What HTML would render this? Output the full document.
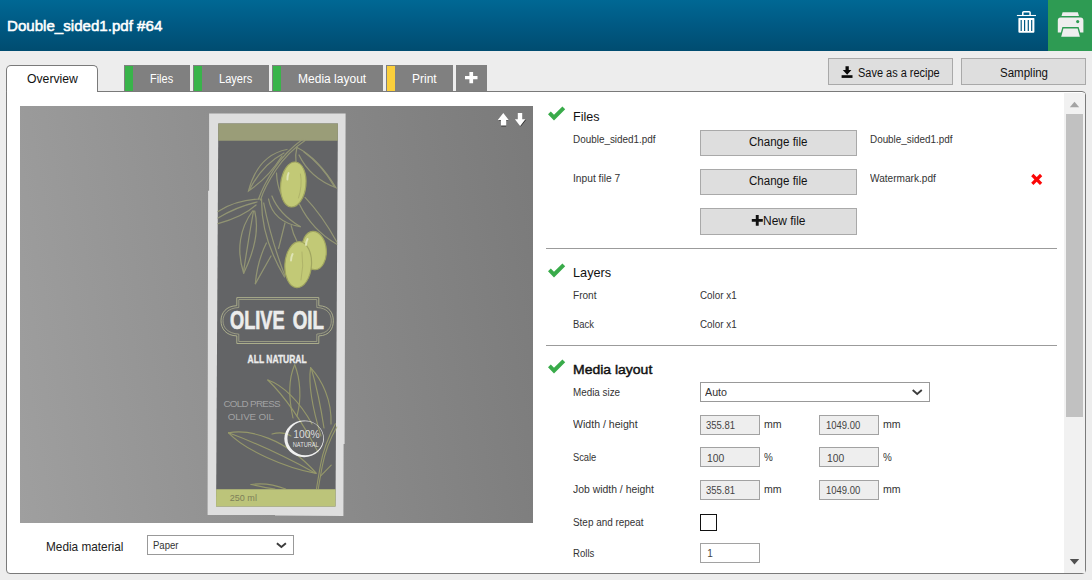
<!DOCTYPE html>
<html lang="en"><head><meta charset="utf-8"><title>Double_sided1.pdf #64</title>
<style>
html,body{margin:0;padding:0}
body{width:1092px;height:580px;overflow:hidden;background:#ededed;font-family:"Liberation Sans",sans-serif;position:relative;color:#222}
.a{position:absolute}
.t{position:absolute;white-space:nowrap;line-height:1}
.hdr{left:0;top:0;width:1092px;height:51px;background:linear-gradient(#006894,#005983 50%,#004c70)}
.pbtn{left:1048px;top:0;width:44px;height:51px;background:#2e9b53}
.tab{position:absolute;top:65px;height:26px;background:#808080}
.tab i{position:absolute;left:1px;top:1px;bottom:0;width:8px}
.g{background:#39b44a}.y{background:#fbcf3b}
.ov{left:6px;top:65px;width:90px;height:27px;background:#fff;border:1px solid #7a7a7a;border-bottom:none;border-radius:5px 5px 0 0}
.panel{left:6px;top:91px;width:1078px;height:481px;background:#fff;border:1px solid #7a7a7a;border-radius:0 4px 4px 4px}
.btn{position:absolute;box-sizing:border-box;background:#dedede;border:1px solid #a9a9a9}
.inp{position:absolute;box-sizing:border-box;background:#eee;border:1px solid #a2a2a2;height:20px}
.sel{position:absolute;box-sizing:border-box;background:#fff;border:1px solid #999}
.sep{position:absolute;left:546px;width:511px;height:1px;background:#9b9b9b}
</style></head>
<body>
<div class="a hdr"></div><div class="a pbtn"></div>
<div class="t" style="left:7.40px;top:17.76px;font-size:15.4px;color:#fff;font-weight:normal;transform:translateY(-0.5px) scaleX(0.9810);transform-origin:0 0;-webkit-text-stroke:0.55px #fff;">Double_sided1.pdf #64</div>
<svg class="a" style="left:1010px;top:5px" width="35" height="35" viewBox="1010 5 35 35">
<path d="M1022.8 15.2V12.6a0.9 0.9 0 0 1 0.9-0.9h5.5a0.9 0.9 0 0 1 0.9 0.9V15.2" fill="none" stroke="#fff" stroke-width="1.5"/>
<path d="M1016.9 15.5H1036" stroke="#fff" stroke-width="1.1"/>
<path fill="#fff" fill-rule="evenodd" d="M1018.4 18.4a0.4 0.4 0 0 1 0.4-0.4H1034a0.4 0.4 0 0 1 0.4 0.4V31.8a1 1 0 0 1-1 1H1019.4a1 1 0 0 1-1-1Z M1020.6 20H1021.8V31H1020.6Z M1024 20H1025.2V31H1024Z M1027.7 20H1028.9V31H1027.7Z M1031.1 20H1032.3V31H1031.1Z"/>
</svg>
<svg class="a" style="left:1054px;top:8px" width="34" height="34" viewBox="0 0 34 34">
<path d="M8.6 4.3H23.8L25 8H7.5Z" fill="#eee"/>
<path d="M3.8 24.5V12.4a2.9 2.9 0 0 1 2.9-2.9H26.5a2.9 2.9 0 0 1 2.9 2.9V24.5H26.2L24.6 18.9H8.4L6.9 24.5Z" fill="#eee"/>
<path d="M9.4 20.4H23.6L25.9 28.8H7.2Z" fill="#eee"/>
<circle cx="23.7" cy="13.6" r="1.6" fill="#2e9b53"/>
</svg>
<div class="a ov"></div>
<div class="t" style="left:26.90px;top:72.54px;font-size:12px;color:#111;font-weight:normal;transform:scaleX(1.0178);transform-origin:0 0;">Overview</div>
<div class="tab" style="left:124px;width:66px"><i class="g"></i></div>
<div class="t" style="left:149.80px;top:72.64px;font-size:12px;color:#fff;font-weight:normal;transform:scaleX(0.9117);transform-origin:0 0;">Files</div>
<div class="tab" style="left:193px;width:76px"><i class="g"></i></div>
<div class="t" style="left:218.70px;top:72.64px;font-size:12px;color:#fff;font-weight:normal;transform:scaleX(0.9217);transform-origin:0 0;">Layers</div>
<div class="tab" style="left:272px;width:111px"><i class="g"></i></div>
<div class="t" style="left:297.90px;top:72.64px;font-size:12px;color:#fff;font-weight:normal;transform:scaleX(1.0023);transform-origin:0 0;">Media layout</div>
<div class="tab" style="left:386px;width:67px"><i class="y"></i></div>
<div class="t" style="left:411.70px;top:72.64px;font-size:12px;color:#fff;font-weight:normal;transform:scaleX(1.0010);transform-origin:0 0;">Print</div>
<div class="tab" style="left:456px;width:31px"></div>
<svg class="a" style="left:464px;top:71px" width="15" height="14" viewBox="464 71 15 14"><path d="M469.4 71.9H473.1V75.9H477.5V79.3H473.1V83.3H469.4V79.3H465V75.9H469.4Z" fill="#fff"/></svg>
<div class="btn" style="left:828px;top:58px;width:125px;height:27px"></div>
<div class="btn" style="left:961px;top:58px;width:125px;height:27px"></div>
<svg class="a" style="left:841px;top:66px" width="12" height="12" viewBox="0 0 12 12"><path d="M4.5 0.2H7.8V3.9H10.4L6.15 8.7L1.8 3.9H4.5Z" fill="#0a0a0a"/><rect x="0.6" y="9.2" width="10.9" height="2.7" fill="#0a0a0a"/></svg>
<div class="t" style="left:858.00px;top:66.94px;font-size:12px;color:#111;font-weight:normal;transform:scaleX(0.9140);transform-origin:0 0;">Save as a recipe</div>
<div class="t" style="left:999.70px;top:66.94px;font-size:12px;color:#111;font-weight:normal;transform:scaleX(0.9594);transform-origin:0 0;">Sampling</div>
<div class="a panel"></div>
<div class="a" style="left:7px;top:90px;width:90px;height:3px;background:#fff"></div>
<div class="a" style="left:20px;top:106px;width:513px;height:417px;background:linear-gradient(80deg,#9f9f9f,#7a7a7a)"></div>
<svg class="a" style="left:200px;top:106px" width="160" height="417" viewBox="200 106 160 417" font-family="Liberation Sans, sans-serif">
<polygon points="209.1,113.6 345.6,113.6 344.6,444 343.6,444 343.4,516 275,515.6 275,515 207.6,515 208.1,190.8 209.1,190.8" fill="#dedede"/>
<polygon points="218.3,123.4 337.9,123.4 335.5,506.6 216.1,506.6" fill="#636466"/>
<polygon points="218.3,123.4 337.9,123.4 337.8,140.7 218.2,140.7" fill="#9a9d78"/>
<polygon points="216.2,489.2 335.6,489.2 335.5,506.6 216.1,506.6" fill="#bcc47a"/>
<g fill="none" stroke="#9a9d76" stroke-width="1.25" stroke-linecap="round" opacity="0.85">
<path d="M303,139 Q285,152 274,169 T258.5,199"/><path d="M305,140.5 Q288,152 276.2,169.5 T260.5,200"/>
<path d="M287,149.5 Q258,155 248.5,191 Q268,178 282,156"/><path d="M284,153 Q262,165 250,189"/>
<path d="M297,147.5 Q318,158 336,187.7 Q310,178 299,155"/><path d="M304,152 Q322,165 334,186"/>
<path d="M297,147 Q295,155 296,162"/><path d="M276.5,173 Q277,185 281,194"/>
<path d="M259.5,199 Q236,200 218,211.5"/><path d="M218,223.6 Q243,217 256,205"/><path d="M257,202 Q236,207 218,218"/>
<path d="M252.6,211 C240,228 236,250 243.7,273.2"/><path d="M254.7,211 C260,232 252,256 243.7,273.2"/><path d="M253.5,211 Q248,242 243.5,272"/>
<path d="M261.6,198.8 C261,230 272,256 284.5,277"/><path d="M263.7,203 C268,225 275,250 285,276"/>
<path d="M271.9,196 Q279,214 300.2,226.6"/><path d="M268.5,199 Q273,222 300.2,226.6"/>
<path d="M285,223 L278.6,248.4"/>
<path d="M266.4,243 Q257,262 255.4,283.6"/><path d="M271,256 Q262,272 255.4,283.6"/>
<path d="M305,197.4 Q322,215 336.8,242"/><path d="M299.5,204.3 Q312,230 336.8,244.3"/>
<path d="M291.2,225.7 Q293,234 296.8,241"/>
</g>
<g stroke="#a0a560" stroke-width="1.2" fill="#c2c976">
<ellipse cx="293.3" cy="184.5" rx="12.6" ry="22.6" transform="rotate(6 293.3 184.5)"/>
<ellipse cx="314" cy="250.5" rx="12.3" ry="19.2" transform="rotate(-4 314 250.5)"/>
<ellipse cx="298.2" cy="264.6" rx="13.3" ry="23" transform="rotate(4 298.2 264.6)"/>
</g>
<g fill="none" stroke="#dfe4b6" stroke-width="1.9" stroke-linecap="round">
<path d="M288.6,173 Q287.2,176 287.4,179.5"/><path d="M307.6,239 Q306,242 306,245"/><path d="M292.6,254 Q291,257 291,260.5"/>
</g>
<g fill="none" stroke="#a9ad66" stroke-width="0.8" stroke-linecap="round">
<path d="M300.5,174 Q302.5,186 298.5,198"/><path d="M302,252 Q304,266 301,280"/>
</g>
<g fill="none" stroke="#b3b590" stroke-width="0.9">
<path d="M236.8,297.6 H318.8 V305.7 C329.5,306 333.3,313 333.3,320.8 C333.3,328.6 329.5,335.6 318.8,335.9 V343.5 H236.8 V335.9 C226,335.6 221,328.6 221,320.8 C221,313 226,306 236.8,305.7 Z"/>
<path d="M238.8,299.5 H316.8 V307.5 C327.5,308 331.3,314 331.3,320.8 C331.3,327.6 327.5,333.6 316.8,334.1 V341.5 H238.8 V334.1 C228,333.6 223,327.6 223,320.8 C223,314 228,308 238.8,307.5 Z" stroke-opacity="0.75"/>
</g>
<text x="230" y="328.9" font-size="25.6" font-weight="bold" fill="#ececec" stroke="#ececec" stroke-width="0.7" textLength="54.6" lengthAdjust="spacingAndGlyphs">OLIVE</text><text x="292.7" y="328.9" font-size="25.6" font-weight="bold" fill="#ececec" stroke="#ececec" stroke-width="0.7" textLength="31.2" lengthAdjust="spacingAndGlyphs">OIL</text>
<text x="247.6" y="363.4" font-size="11.6" font-weight="bold" fill="#ececec" stroke="#ececec" stroke-width="0.35" textLength="59" lengthAdjust="spacingAndGlyphs">ALL NATURAL</text>
<g fill="none" stroke="#a8ab6c" stroke-width="1.15" stroke-linecap="round" opacity="0.72">
<path d="M294.7,364.8 C288,380 289,400 293,418"/><path d="M294.7,364.8 C300,378 302,398 297,416"/>
<path d="M310.6,367.6 C308,385 313,410 321,436"/><path d="M310.6,367.6 C322,380 332,400 331,424"/><path d="M311.5,369 Q319,395 324,428"/>
<path d="M267.8,380 C283,385 300,402 312,424"/><path d="M267.8,380 C276,388 295,408 318,452"/>
<path d="M228.5,432.8 C250,429 285,438 316,473"/><path d="M228.5,432.8 C245,450 285,468 316,473.4"/><path d="M228.5,432.8 Q270,448 316,473.4"/>
<path d="M272,434 Q283,431 291,436"/>
<path d="M335.4,423.8 Q324,445 320.5,465 T316.5,489"/><path d="M336.8,427 Q326,446 322.3,466 T318.3,489"/>
<path d="M331.2,465.2 L320.5,476.2"/>
<path d="M251,484.5 Q268,482 285.7,489"/><path d="M251,484.5 Q266,488 275,489"/>
</g>
<text x="223.4" y="406.9" font-size="9.8" fill="#d8d8d8" fill-opacity="0.55" textLength="57.2" lengthAdjust="spacing">COLD PRESS</text>
<text x="227.8" y="420" font-size="9.8" fill="#d8d8d8" fill-opacity="0.55" textLength="46.2" lengthAdjust="spacing">OLIVE OIL</text>
<path fill-rule="evenodd" fill="#f0f0f0" d="M284.3,438.8 a19.8,18.4 0 1,0 39.6,0 a19.8,18.4 0 1,0 -39.6,0 Z M287.4,438.2 a17.9,17 0 1,1 35.8,0 a17.9,17 0 1,1 -35.8,0 Z"/>
<text x="293.2" y="437.6" font-size="11.6" fill="#f2f2f2" fill-opacity="0.85" textLength="26.5" lengthAdjust="spacingAndGlyphs">100%</text>
<text x="292.7" y="446.7" font-size="6.4" fill="#f2f2f2" fill-opacity="0.9" textLength="26.1" lengthAdjust="spacingAndGlyphs">NATURAL</text>
<text x="229.8" y="501.1" font-size="9.6" fill="#7d8059" textLength="27.1" lengthAdjust="spacingAndGlyphs">250 ml</text>
</svg>

<svg class="a" style="left:496px;top:112px" width="32" height="16" viewBox="0 0 32 16">
<path d="M5.2 13.9H10.1" stroke="#111" stroke-width="0.9"/>
<path d="M3.2 8.3H4.9M10.2 8.3H11.6" stroke="#222" stroke-width="0.7"/>
<path d="M7.3 1L12.7 8H10.2V13.4H4.9V8H1.8Z" fill="#fff"/>
<path d="M24.6 14.3L29.6 7.9" stroke="#222" stroke-width="0.8"/>
<path d="M24.1 14L29.3 7.3H26.2V1H21.8V7.3H18.9Z" fill="#fff"/>
</svg>
<div class="t" style="left:45.70px;top:540.00px;font-size:13px;color:#222;font-weight:normal;transform:scaleX(0.9079);transform-origin:0 0;">Media material</div>
<div class="sel" style="left:147px;top:535px;width:147px;height:20px"></div>
<div class="t" style="left:152.90px;top:540.83px;font-size:10px;color:#333;font-weight:normal;transform:scaleX(0.9556);transform-origin:0 0;">Paper</div>
<svg class="a" style="left:275px;top:541px" width="14" height="10" viewBox="0 0 14 10"><path d="M1.9 2.3L6.4 6.1L10.9 2.3" fill="none" stroke="#3c3c3c" stroke-width="1.9"/></svg>
<svg class="a" style="left:547.2px;top:106.4px" width="19" height="15" viewBox="0 0 19 15"><path d="M1 8.3L3.8 5.5L7 8.7L15.4 0.6L18.2 3.3L7 14.4Z" fill="#39ab4a"/></svg>
<div class="t" style="left:572.70px;top:109.70px;font-size:13px;color:#111;font-weight:normal;transform:scaleX(0.9655);transform-origin:0 0;">Files</div>
<div class="t" style="left:572.70px;top:134.84px;font-size:10px;color:#333;font-weight:normal;transform:scaleX(0.9904);transform-origin:0 0;">Double_sided1.pdf</div>
<div class="t" style="left:572.70px;top:173.84px;font-size:10px;color:#333;font-weight:normal;transform:scaleX(1.0229);transform-origin:0 0;">Input file 7</div>
<div class="btn" style="left:700px;top:130px;width:157px;height:26px"></div>
<div class="btn" style="left:700px;top:169px;width:157px;height:26px"></div>
<div class="btn" style="left:700px;top:208px;width:157px;height:27px"></div>
<div class="t" style="left:749.20px;top:135.84px;font-size:12px;color:#111;font-weight:normal;transform:scaleX(0.9619);transform-origin:0 0;">Change file</div>
<div class="t" style="left:749.20px;top:175.14px;font-size:12px;color:#111;font-weight:normal;transform:scaleX(0.9619);transform-origin:0 0;">Change file</div>
<div class="t" style="left:763.10px;top:214.54px;font-size:12px;color:#111;font-weight:normal;transform:scaleX(0.9957);transform-origin:0 0;">New file</div>
<svg class="a" style="left:751px;top:214px" width="13" height="13" viewBox="751 214 13 13"><path d="M755.8 214.9H758.7V218.9H762.8V221.8H758.7V225.8H755.8V221.8H751.8V218.9H755.8Z" fill="#111"/></svg>
<div class="t" style="left:869.80px;top:134.84px;font-size:10px;color:#333;font-weight:normal;transform:scaleX(0.9880);transform-origin:0 0;">Double_sided1.pdf</div>
<div class="t" style="left:869.60px;top:173.84px;font-size:10px;color:#333;font-weight:normal;transform:scaleX(1.0092);transform-origin:0 0;">Watermark.pdf</div>
<svg class="a" style="left:1030px;top:172px" width="14" height="15" viewBox="1030 172 14 15"><path d="M1032.3 175L1041.1 183.8M1041.1 175L1032.3 183.8" stroke="#fb0707" stroke-width="3.2" fill="none"/></svg>
<div class="sep" style="top:248px"></div>
<svg class="a" style="left:547.2px;top:262.6px" width="19" height="15" viewBox="0 0 19 15"><path d="M1 8.3L3.8 5.5L7 8.7L15.4 0.6L18.2 3.3L7 14.4Z" fill="#39ab4a"/></svg>
<div class="t" style="left:572.60px;top:266.00px;font-size:13px;color:#111;font-weight:normal;transform:scaleX(0.9790);transform-origin:0 0;">Layers</div>
<div class="t" style="left:572.60px;top:290.54px;font-size:10px;color:#333;font-weight:normal;transform:scaleX(1.0068);transform-origin:0 0;">Front</div>
<div class="t" style="left:699.60px;top:290.54px;font-size:10px;color:#333;font-weight:normal;transform:scaleX(0.9856);transform-origin:0 0;">Color x1</div>
<div class="t" style="left:572.60px;top:319.54px;font-size:10px;color:#333;font-weight:normal;transform:scaleX(0.9446);transform-origin:0 0;">Back</div>
<div class="t" style="left:699.60px;top:319.54px;font-size:10px;color:#333;font-weight:normal;transform:scaleX(0.9856);transform-origin:0 0;">Color x1</div>
<div class="sep" style="top:345px"></div>
<svg class="a" style="left:547.2px;top:359.4px" width="19" height="15" viewBox="0 0 19 15"><path d="M1 8.3L3.8 5.5L7 8.7L15.4 0.6L18.2 3.3L7 14.4Z" fill="#39ab4a"/></svg>
<div class="t" style="left:572.80px;top:362.54px;font-size:13.3px;color:#111;font-weight:normal;transform:translateY(-0.4px) scaleX(1.0516);transform-origin:0 0;-webkit-text-stroke:0.45px #111;">Media layout</div>
<div class="t" style="left:572.50px;top:387.54px;font-size:10px;color:#333;font-weight:normal;transform:scaleX(0.9854);transform-origin:0 0;">Media size</div>
<div class="sel" style="left:700px;top:382px;width:230px;height:20px"></div>
<div class="t" style="left:705.40px;top:387.64px;font-size:10px;color:#333;font-weight:normal;transform:scaleX(1.0694);transform-origin:0 0;">Auto</div>
<svg class="a" style="left:911px;top:388px" width="14" height="10" viewBox="0 0 14 10"><path d="M1.7 2.1L6.2 5.9L10.8 2.1" fill="none" stroke="#3c3c3c" stroke-width="1.9"/></svg>
<div class="t" style="left:572.50px;top:419.84px;font-size:10px;color:#333;font-weight:normal;transform:scaleX(1.0565);transform-origin:0 0;">Width / height</div>
<div class="inp" style="left:700px;top:415px;width:60px"></div>
<div class="inp" style="left:819px;top:415px;width:60px"></div>
<div class="t" style="left:705.70px;top:420.84px;font-size:10px;color:#444;font-weight:normal;transform:scaleX(0.9514);transform-origin:0 0;">355.81</div>
<div class="t" style="left:825.60px;top:420.84px;font-size:10px;color:#444;font-weight:normal;transform:scaleX(0.9461);transform-origin:0 0;">1049.00</div>
<div class="t" style="left:763.80px;top:419.84px;font-size:10px;color:#333;font-weight:normal;transform:scaleX(1.0564);transform-origin:0 0;">mm</div>
<div class="t" style="left:883.00px;top:419.84px;font-size:10px;color:#333;font-weight:normal;transform:scaleX(1.0564);transform-origin:0 0;">mm</div>
<div class="t" style="left:572.50px;top:452.84px;font-size:10px;color:#333;font-weight:normal;transform:scaleX(0.9314);transform-origin:0 0;">Scale</div>
<div class="inp" style="left:700px;top:447px;width:60px"></div>
<div class="inp" style="left:819px;top:447px;width:60px"></div>
<div class="t" style="left:707.40px;top:453.84px;font-size:10px;color:#444;font-weight:normal;transform:scaleX(1.0368);transform-origin:0 0;">100</div>
<div class="t" style="left:826.60px;top:453.84px;font-size:10px;color:#444;font-weight:normal;transform:scaleX(1.0309);transform-origin:0 0;">100</div>
<div class="t" style="left:763.80px;top:452.84px;font-size:10px;color:#333;font-weight:normal;transform:scaleX(0.9897);transform-origin:0 0;">%</div>
<div class="t" style="left:883.00px;top:452.84px;font-size:10px;color:#333;font-weight:normal;transform:scaleX(0.9897);transform-origin:0 0;">%</div>
<div class="t" style="left:572.50px;top:484.84px;font-size:10px;color:#333;font-weight:normal;transform:scaleX(1.0408);transform-origin:0 0;">Job width / height</div>
<div class="inp" style="left:700px;top:480px;width:60px"></div>
<div class="inp" style="left:819px;top:480px;width:60px"></div>
<div class="t" style="left:705.70px;top:485.84px;font-size:10px;color:#444;font-weight:normal;transform:scaleX(0.9514);transform-origin:0 0;">355.81</div>
<div class="t" style="left:825.60px;top:485.84px;font-size:10px;color:#444;font-weight:normal;transform:scaleX(0.9461);transform-origin:0 0;">1049.00</div>
<div class="t" style="left:763.80px;top:484.84px;font-size:10px;color:#333;font-weight:normal;transform:scaleX(1.0564);transform-origin:0 0;">mm</div>
<div class="t" style="left:883.00px;top:484.84px;font-size:10px;color:#333;font-weight:normal;transform:scaleX(1.0564);transform-origin:0 0;">mm</div>
<div class="t" style="left:572.50px;top:517.83px;font-size:10px;color:#333;font-weight:normal;transform:scaleX(0.9920);transform-origin:0 0;">Step and repeat</div>
<div class="a" style="left:700px;top:514px;width:15px;height:15px;border:1px solid #111;background:#fff"></div>
<div class="t" style="left:572.50px;top:548.83px;font-size:10px;color:#333;font-weight:normal;transform:scaleX(0.9583);transform-origin:0 0;">Rolls</div>
<div class="inp" style="left:700px;top:543px;width:60px;background:#fff"></div>
<div class="t" style="left:707.20px;top:548.83px;font-size:10px;color:#444;font-weight:normal;">1</div>
<div class="a" style="left:1064px;top:93px;width:20.5px;height:480px;background:#f1f1f1"></div>
<div class="a" style="left:1066px;top:114px;width:17px;height:303px;background:#c1c1c1"></div>
<svg class="a" style="left:1064px;top:93px" width="21" height="480" viewBox="0 0 21 480"><path d="M5.8 14.2L10.5 8.8L15.2 14.2Z" fill="#a3a3a3"/><path d="M5.8 466L10.5 471.4L15.2 466Z" fill="#505050"/></svg>
</body></html>
